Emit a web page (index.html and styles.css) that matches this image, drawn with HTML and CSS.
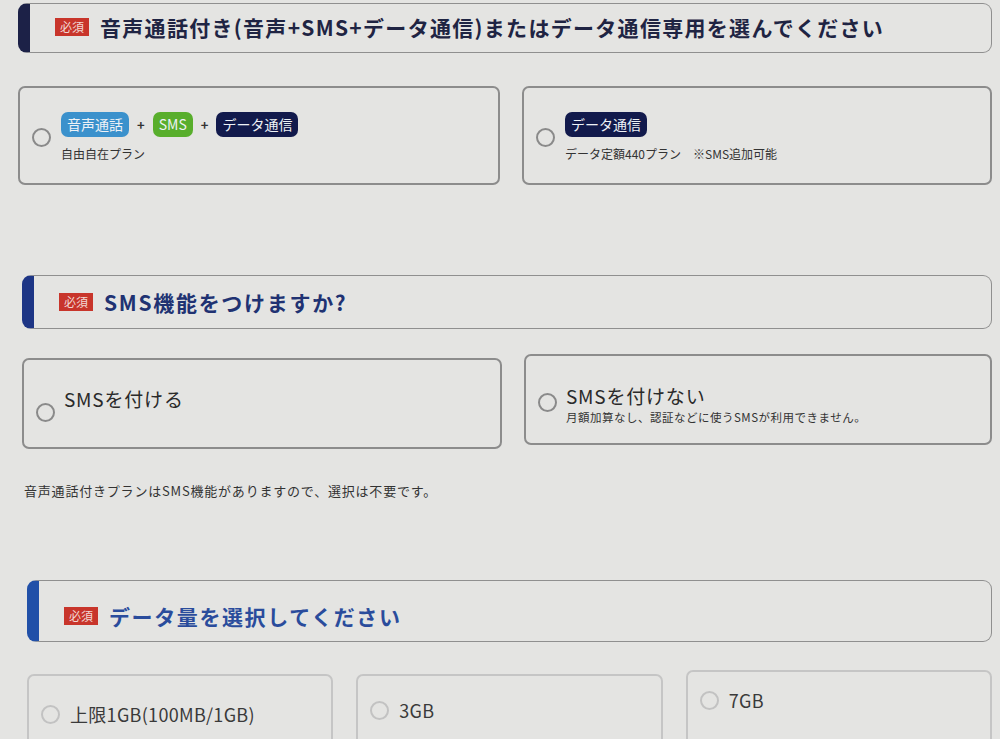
FILE: index.html
```html
<!DOCTYPE html>
<html lang="ja">
<head>
    <meta charset="UTF-8">
    <meta name="viewport" content="width=device-width, initial-scale=1.0">
    <title>プラン選択</title>
    <link rel="stylesheet" href="styles.css">
</head>
<body>
    <main class="form">
        <section class="block block-plan">
            <h2 class="block-title title-dark"><span class="required">必須</span>音声通話付き(音声+SMS+データ通信)またはデータ通信専用を選んでください</h2>
            <div class="choices two">
                <label class="choice plan-choice">
                    <span class="radio"></span>
                    <span class="choice-body">
                        <span class="tags">
                            <span class="tag tag-voice">音声通話</span>
                            <span class="plus">+</span>
                            <span class="tag tag-sms">SMS</span>
                            <span class="plus">+</span>
                            <span class="tag tag-data">データ通信</span>
                        </span>
                        <span class="plan-name">自由自在プラン</span>
                    </span>
                </label>
                <label class="choice plan-choice">
                    <span class="radio"></span>
                    <span class="choice-body">
                        <span class="tags">
                            <span class="tag tag-data">データ通信</span>
                        </span>
                        <span class="plan-name">データ定額440プラン　※SMS追加可能</span>
                    </span>
                </label>
            </div>
        </section>

        <section class="block block-sms">
            <h2 class="block-title title-navy"><span class="required">必須</span>SMS機能をつけますか?</h2>
            <div class="choices two">
                <label class="choice sms-choice">
                    <span class="radio"></span>
                    <span class="choice-body">
                        <span class="choice-label">SMSを付ける</span>
                    </span>
                </label>
                <label class="choice sms-choice sms-none">
                    <span class="radio"></span>
                    <span class="choice-body">
                        <span class="choice-label">SMSを付けない</span>
                        <span class="choice-note">月額加算なし、認証などに使うSMSが利用できません。</span>
                    </span>
                </label>
            </div>
            <p class="help">音声通話付きプランはSMS機能がありますので、選択は不要です。</p>
        </section>

        <section class="block block-data">
            <h2 class="block-title title-blue"><span class="required">必須</span>データ量を選択してください</h2>
            <div class="choices three">
                <label class="choice gb-choice">
                    <span class="radio light"></span>
                    <span class="gb-label">上限1GB(100MB/1GB)</span>
                </label>
                <label class="choice gb-choice gb-3">
                    <span class="radio light"></span>
                    <span class="gb-label">3GB</span>
                </label>
                <label class="choice gb-choice gb-7">
                    <span class="radio light"></span>
                    <span class="gb-label">7GB</span>
                </label>
            </div>
        </section>
    </main>
</body>
</html>
```

FILE: styles.css
```css
body {
    margin: 0;
    background: #e4e4e2;
    color: #2a2a2a;
    font-family: "Noto Sans CJK JP", "Noto Sans", sans-serif;
    overflow: hidden;
}
.form {
    padding: 3px 8px 0 18px;
}
.block-title {
    margin: 0;
    height: 50px;
    box-sizing: border-box;
    display: flex;
    align-items: center;
    padding-left: 25px;
    border: 1px solid #8f8f8f;
    border-left: 12px solid #1c2147;
    border-radius: 9px;
    font-size: 21px;
    font-weight: bold;
    letter-spacing: 1.3px;
    white-space: nowrap;
}
.title-dark {
    color: #1f2443;
    padding-bottom: 3px;
}
.title-navy {
    color: #203272;
    border-left-color: #1d3585;
    height: 54px;
    letter-spacing: 1.7px;
}
.title-blue {
    color: #2a4c9c;
    border-left-color: #2150a8;
    height: 62px;
    padding-top: 10px;
    letter-spacing: 1.6px;
}
.required {
    background: #c8352b;
    color: #f2d8d4;
    font-size: 12px;
    font-weight: normal;
    letter-spacing: 0;
    padding: 0 5px;
    height: 18px;
    line-height: 18px;
    margin-right: 11px;
}
.choices {
    display: grid;
    gap: 22px;
}
.two {
    grid-template-columns: minmax(0, 482fr) minmax(0, 470fr);
}
.three {
    grid-template-columns: 1fr 1fr 1fr;
}
.choice {
    display: flex;
    align-items: center;
    border: 2px solid #8c8c8c;
    border-radius: 7px;
    box-sizing: border-box;
}
.radio {
    width: 19px;
    height: 19px;
    border: 2px solid #8a8a8a;
    border-radius: 50%;
    box-sizing: border-box;
    flex-shrink: 0;
    margin-left: 12px;
    margin-right: 10px;
}
.radio.light {
    border-color: #c2c2c2;
}
.choice-body {
    display: flex;
    flex-direction: column;
}

/* plan */
.block-plan .choices {
    margin-top: 33px;
}
.plan-choice {
    height: 99px;
    padding-top: 2px;
}
.plan-choice .radio {
    margin-top: 2px;
}
.tags {
    display: flex;
    align-items: center;
}
.tag {
    color: #eef2f6;
    font-size: 14px;
    height: 25px;
    line-height: 25px;
    padding: 0 6px;
    border-radius: 7px;
}
.tag-voice {
    background: #3b91cc;
}
.tag-sms {
    background: #58ae2c;
}
.tag-data {
    background: #121a4c;
}
.plus {
    font-size: 13px;
    font-weight: bold;
    color: #333;
    margin: 0 8px;
}
.plan-name {
    font-size: 12px;
    margin-top: 8px;
    color: #333;
}

/* sms */
.block-sms {
    margin-top: 90px;
    padding-left: 4px;
}
.block-sms .choices {
    margin-top: 29px;
}
.sms-choice {
    height: 91px;
}
.sms-choice .radio {
    margin-top: 18px;
    margin-right: 9px;
}
.sms-none {
    margin-top: -4px;
}
.sms-none .radio {
    margin-top: 6px;
}
.choice-label {
    font-size: 19px;
    letter-spacing: 0.8px;
    color: #2a2a2a;
    margin-top: -10px;
}
.sms-none .choice-label {
    margin-top: 8px;
}
.choice-note {
    font-size: 11.5px;
    letter-spacing: 0.5px;
    color: #333;
    margin-top: 0;
}
.help {
    font-size: 13px;
    letter-spacing: 0.8px;
    color: #333;
    margin: 32px 0 0 2px;
}

/* data */
.block-data {
    margin-top: 80px;
    padding-left: 9px;
}
.block-data .choices {
    margin-top: 32px;
    gap: 23px;
}
.gb-choice {
    height: 80px;
    align-items: flex-start;
    padding-top: 25px;
    border-color: #c5c5c5;
}
.gb-3 {
    padding-top: 21px;
}
.gb-7 {
    padding-top: 15px;
    margin-top: -4px;
}
.gb-choice .radio {
    margin-top: 4px;
}
.gb-label {
    font-size: 18px;
    letter-spacing: 0.3px;
    color: #3a3a3a;
}
```
